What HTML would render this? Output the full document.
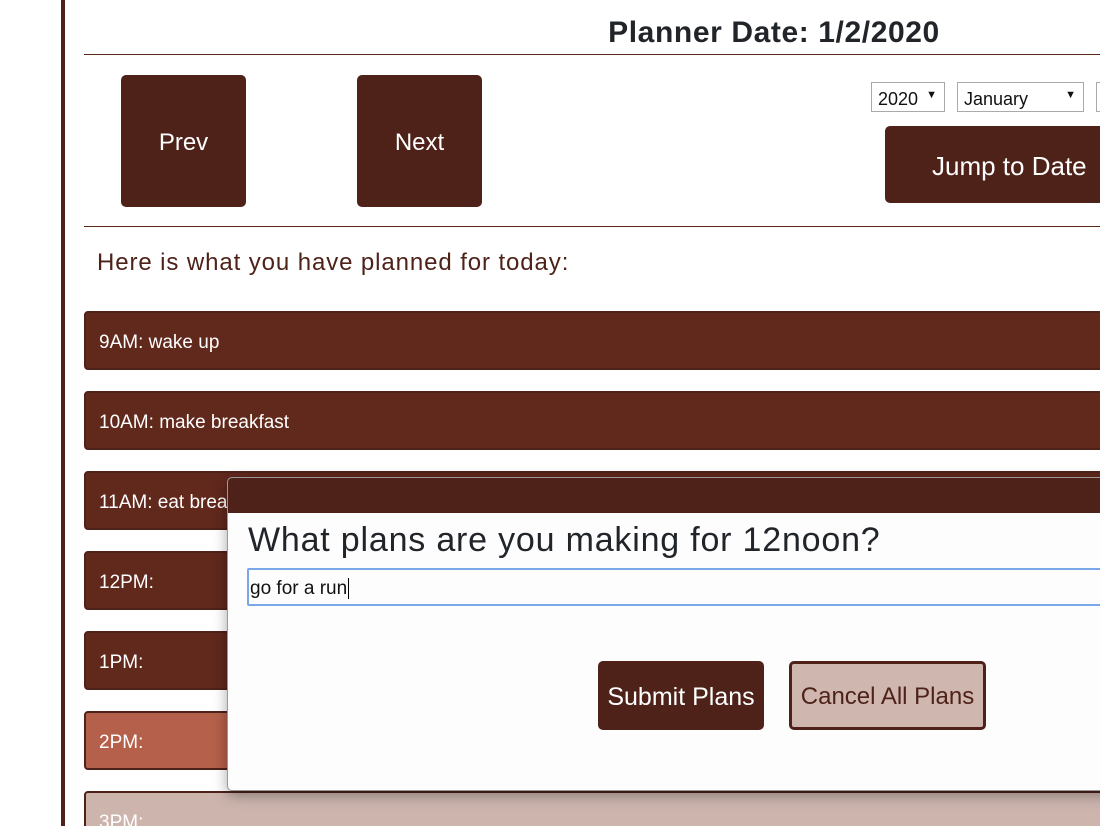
<!DOCTYPE html>
<html style="overflow:hidden;height:826px"><head><style>
*{box-sizing:border-box;margin:0;padding:0}
body{width:1100px;height:826px;overflow:hidden;background:#fff;font-family:"Liberation Sans",sans-serif;position:relative}
.vl{position:absolute;left:61px;top:0;width:4px;height:826px;background:#4e2219}
.hr{position:absolute;left:84px;right:0;height:1px;background:#5a2818}
.title{position:absolute;left:0;width:1548px;text-align:center;top:16px;font-size:30px;letter-spacing:0.6px;font-weight:bold;color:#212529}
.btn{position:absolute;background:#4e2219;color:#fff;border-radius:5px;display:flex;align-items:center;justify-content:center;padding-top:3px}
.sel{position:absolute;top:82px;height:30px;border:1px solid #aaa;background:#fff;font-size:18px;color:#111;padding:6px 0 0 6px}
.sel span{position:absolute;right:7px;top:6px;font-size:11px}
.here{position:absolute;left:97px;top:249px;font-size:24px;letter-spacing:0.9px;color:#4e2219}
.row{position:absolute;left:84px;width:1030px;height:59px;border:2px solid #4e2219;border-radius:4px;background:#61281c;color:#fff;font-size:19px;padding:19px 0 0 13px}
.modal{position:absolute;left:227px;top:477px;width:900px;height:314px;background:#fdfdfd;border:1px solid #999;border-radius:5px;box-shadow:0 4px 14px rgba(0,0,0,.35);overflow:hidden}
.mh{height:35px;background:#4e2219}
</style></head><body>
<div class="vl"></div>
<div class="title">Planner Date: 1/2/2020</div>
<div class="hr" style="top:54px"></div>
<div class="btn" style="left:121px;top:75px;width:125px;height:132px;font-size:24px">Prev</div>
<div class="btn" style="left:357px;top:75px;width:125px;height:132px;font-size:24px">Next</div>
<div class="sel" style="left:871px;width:74px">2020<span>▼</span></div>
<div class="sel" style="left:957px;width:127px">January<span>▼</span></div>
<div class="sel" style="left:1096px;width:20px"></div>
<div class="btn" style="left:885px;top:126px;width:240px;height:77px;font-size:26px;justify-content:flex-start;padding-left:47px">Jump to Date</div>
<div class="hr" style="top:226px"></div>
<div class="here">Here is what you have planned for today:</div>
<div class="row" style="top:311px">9AM: wake up</div>
<div class="row" style="top:391px">10AM: make breakfast</div>
<div class="row" style="top:471px">11AM: eat breakfast</div>
<div class="row" style="top:551px">12PM:</div>
<div class="row" style="top:631px">1PM:</div>
<div class="row" style="top:711px;background:#b5604a">2PM:</div>
<div class="row" style="top:791px;background:#cdb5ae">3PM:</div>
<div class="modal">
<div class="mh"></div>
<div style="position:absolute;left:20px;top:43px;font-size:34px;letter-spacing:0.8px;color:#212529">What plans are you making for 12noon?</div>
<div style="position:absolute;left:19px;top:90px;width:900px;height:38px;border:2px solid #7aa7e8;border-radius:2px;font-size:19px;padding:8px 0 0 1px;color:#111">go for a run<span style="border-left:1px solid #000;margin-left:1px"></span></div>
<div class="btn" style="left:370px;top:183px;width:166px;height:69px;font-size:25px">Submit Plans</div>
<div class="btn" style="left:561px;top:183px;width:197px;height:69px;font-size:24px;background:#cfb7b0;color:#4e2219;border:3px solid #4e2219">Cancel All Plans</div>
</div>
</body></html>
